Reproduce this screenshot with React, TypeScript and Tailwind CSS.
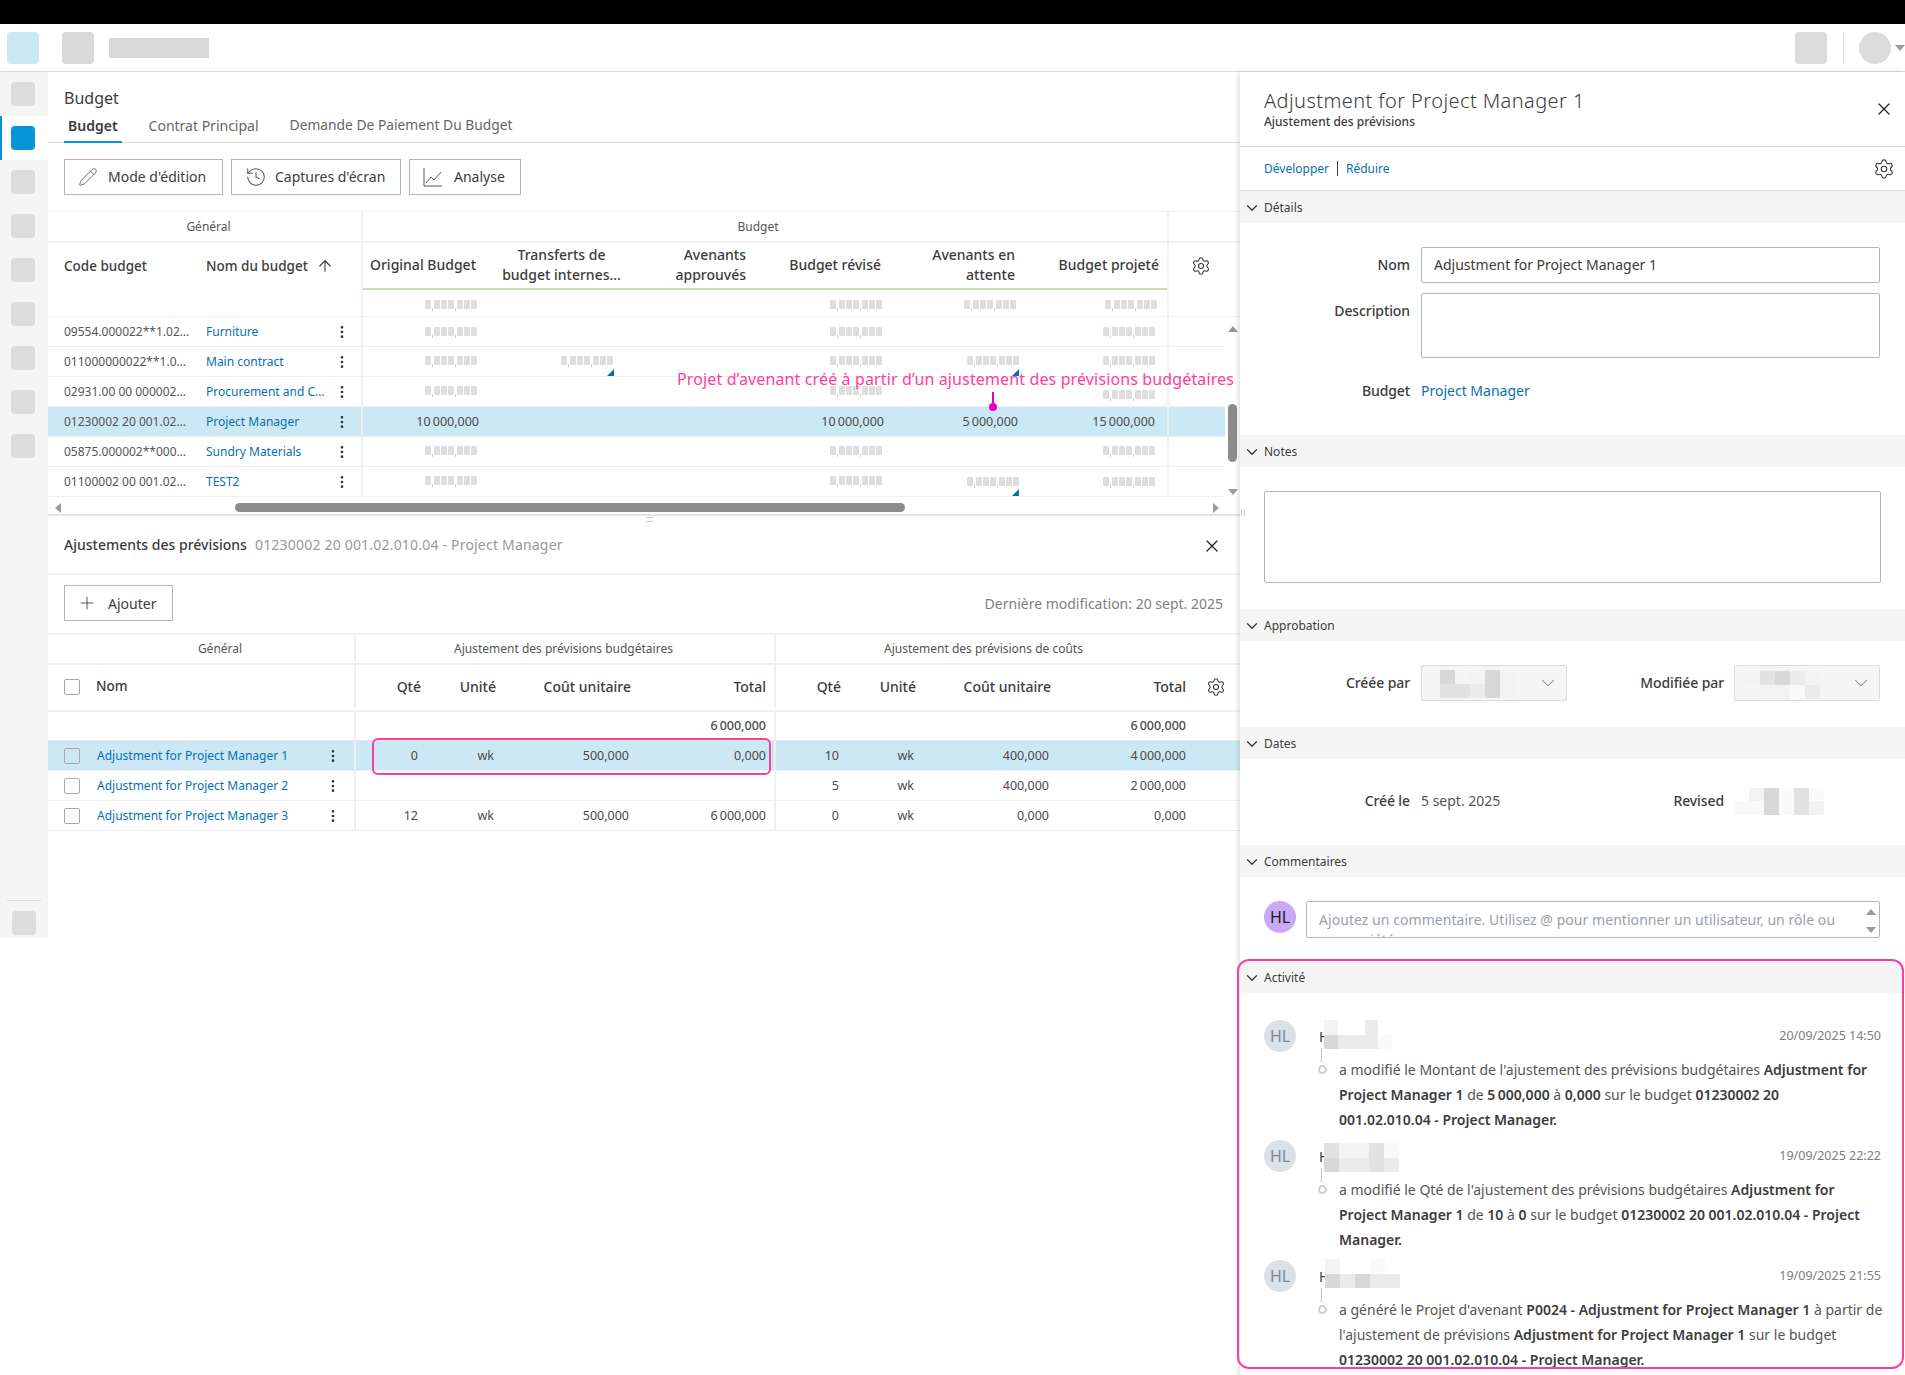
import { ReactNode } from "react";
import { ArrowUp, ChevronDown, EllipsisVertical, History, Pencil, Plus, Settings, X } from "lucide-react";

const budgetGrid = "grid grid-cols-[158px_157px_121px_144px_126px_135px_134px_144px_73px]";
const adjustGrid = "grid grid-cols-[308px_73px_75px_135px_137px_73px_75px_135px_135px_46px]";

const shades = ["bg-transparent", "bg-[#fafafa]", "bg-[#f3f3f3]", "bg-[#ebebeb]", "bg-[#e2e2e2]", "bg-[#d8d8d8]"];

function Mosaic({ rows, cell, className }: { rows: number[][]; cell: string; className?: string }) {
  return (
    <div className={className}>
      {rows.map((row, i) => (
        <div key={i} className="flex">
          {row.map((s, j) => (
            <div key={j} className={`${cell} ${shades[s]}`} />
          ))}
        </div>
      ))}
    </div>
  );
}

function Masked({ className = "" }: { className?: string }) {
  const block = <div className="h-[9px] w-[6px] rounded-[1px] bg-[#dedede]" />;
  const comma = (
    <div className="flex h-[11px] w-[3px] items-end justify-center">
      <div className="h-[3px] w-[1px] bg-[#cfcfcf]" />
    </div>
  );
  const group = (
    <div className="flex gap-[1px]">
      {block}
      {block}
      {block}
    </div>
  );
  return (
    <div className={`flex items-start ${className}`}>
      {block}
      {comma}
      {group}
      {comma}
      {group}
    </div>
  );
}

function Corner({ className = "" }: { className?: string }) {
  return (
    <svg viewBox="0 0 7 7" className={`absolute h-[7px] w-[7px] ${className}`}>
      <polygon points="7,0 7,7 0,7" fill="#0670b0" />
    </svg>
  );
}

function Tri({ up, className = "" }: { up?: boolean; className?: string }) {
  return (
    <svg viewBox="0 0 10 6" className={`h-[6px] w-[10px] ${className}`}>
      <polygon points={up ? "5,0 10,6 0,6" : "0,0 10,0 5,6"} fill="#9a9a9a" />
    </svg>
  );
}

function ChartIcon() {
  return (
    <svg viewBox="0 0 20 20" className="h-5 w-5" fill="none" stroke="#555" strokeWidth="1">
      <path d="M1 1v18h18" />
      <path d="M3 16l5-6 3 3 7-8" />
    </svg>
  );
}

function ToolButton({ icon, label, width, gap }: { icon: ReactNode; label: string; width: string; gap: string }) {
  return (
    <div className={`flex h-9 items-center border border-[#b5b5b5] pl-[13px] text-[14px] text-[#3c3c3c] ${gap} ${width}`}>
      {icon}
      <span className="pb-[2px]">{label}</span>
    </div>
  );
}

function Check({ clear }: { clear?: boolean }) {
  return <div className={`h-4 w-4 shrink-0 rounded-[2px] border border-[#a8a8a8] ${clear ? "" : "bg-white"}`} />;
}

function Num({ children, pr = "pr-[8px]", extra = "" }: { children?: ReactNode; pr?: string; extra?: string }) {
  return <div className={`relative flex items-center justify-end pt-px text-[12.5px] text-[#4a4a4a] ${pr} ${extra}`}>{children}</div>;
}

const budgetRows = [
  { code: "09554.000022**1.02…", name: "Furniture" },
  { code: "011000000022**1.0…", name: "Main contract" },
  { code: "02931.00 00 000002…", name: "Procurement and C…" },
  { code: "01230002 20 001.02…", name: "Project Manager" },
  { code: "05875.000002**000…", name: "Sundry Materials" },
  { code: "01100002 00 001.02…", name: "TEST2" },
];

function BudgetTable() {
  return (
    <div className="border-t border-[#f0f0f0]">
      <div className="flex h-[31px] border-b-2 border-[#f0f0f0] text-[12px] text-[#555]">
        <div className="flex w-[315px] items-center justify-center border-r-2 border-[#f0f0f0] pl-2">Général</div>
        <div className="flex w-[804px] items-center justify-center pr-[14px]">Budget</div>
        <div className="w-[73px] border-l-2 border-[#f0f0f0]" />
      </div>
      <div className={`${budgetGrid} h-[47px] text-[14px] font-medium leading-[20px] text-[#3c3c3c]`}>
        <div className="flex items-center pb-[2px] pl-4 text-[13.5px]">Code budget</div>
        <div className="flex items-center gap-2 border-r-2 border-[#f0f0f0] pb-[2px] text-[13.5px]">
          Nom du budget
          <ArrowUp size={18} strokeWidth={1.5} />
        </div>
        <div className="flex items-center justify-end border-b-2 border-[#c9dfae] pb-[2px] pr-2">Original Budget</div>
        <div className="flex items-center justify-center border-b-2 border-[#c9dfae] pb-[2px] pl-[11px] text-center">
          Transferts de
          <br />
          budget internes…
        </div>
        <div className="flex items-center justify-end border-b-2 border-[#c9dfae] pb-[2px] pr-2 text-right">
          Avenants
          <br />
          approuvés
        </div>
        <div className="flex items-center justify-end border-b-2 border-[#c9dfae] pb-[2px] pr-2">Budget révisé</div>
        <div className="flex items-center justify-end border-b-2 border-[#c9dfae] pb-[2px] pr-2 text-right">
          Avenants en
          <br />
          attente
        </div>
        <div className="flex items-center justify-end border-b-2 border-[#c9dfae] pb-[2px] pr-2">Budget projeté</div>
        <div className="flex items-center border-l-2 border-[#f0f0f0] pb-[2px] pl-[22px]">
          <Settings size={20} strokeWidth={1.3} color="#333" />
        </div>
      </div>

      {/* totals */}
      <div className={`${budgetGrid} h-[27px] border-b border-[#f0f0f0]`}>
        <div />
        <div className="border-r-2 border-[#f0f0f0]" />
        <Num pr="pr-[7px]"><Masked className="mt-[3px]" /></Num>
        <Num />
        <Num />
        <Num pr="pr-[7px]"><Masked className="mt-[3px]" /></Num>
        <Num pr="pr-[7px]"><Masked className="mt-[4px]" /></Num>
        <Num pr="pr-[10px]"><Masked className="mt-[3px]" /></Num>
        <div className="border-l-2 border-[#f0f0f0]" />
      </div>

      {budgetRows.map((r, i) => {
        const selected = i === 3;
        const lift = i > 0 ? "mb-[2px]" : "";
        return (
          <div key={r.code} className={`${budgetGrid} relative h-[30px] border-b border-[#f0f0f0] ${selected ? "bg-[#cce8f5]" : ""}`}>
            <div className="flex items-center whitespace-nowrap pl-4 text-[12px] text-[#555]">{r.code}</div>
            <div className="flex items-center justify-between border-r-2 border-[#f0f0f0] pr-[11px] text-[12px] text-[#0670b0]">
              <span className="whitespace-nowrap">{r.name}</span>
              <EllipsisVertical size={16} strokeWidth={2} color="#333" className="shrink-0" />
            </div>
            {selected ? (
              <>
                <Num pr="pr-[5px]">10{"\u2009"}000,000</Num>
                <Num />
                <Num />
                <Num pr="pr-[5px]">10{"\u2009"}000,000</Num>
                <Num pr="pr-[5px]" extra="pt-[2px]">5{"\u2009"}000,000</Num>
                <Num pr="pr-[12px]">15{"\u2009"}000,000</Num>
                <div className="border-l-2 border-[#f0f0f0]" />
                {/* annotation */}
                <div className="absolute left-[629px] top-[-38px] z-20 whitespace-nowrap text-[16px] leading-5 tracking-[0.13px] text-[#ff3d9e]">
                  Projet d’avenant créé à partir d’un ajustement des prévisions budgétaires
                </div>
                <div className="absolute left-[944px] top-[-15px] h-[15px] w-[2px] bg-[#e600c4]" />
                <div className="absolute left-[941px] top-[-4px] h-2 w-2 rounded-full bg-[#e600c4]" />
              </>
            ) : (
              <>
                <Num pr="pr-[7px]"><Masked className={lift} /></Num>
                <Num pr="pr-[15px]">
                  {i === 1 && (
                    <>
                      <Masked className={lift} />
                      <Corner className="bottom-0 right-[14px]" />
                    </>
                  )}
                </Num>
                <Num />
                <Num pr="pr-[7px]"><Masked className={lift} /></Num>
                <Num pr="pr-[4px]">
                  {(i === 1 || i === 5) && (
                    <>
                      <Masked className={i === 1 ? lift : ""} />
                      <Corner className="bottom-0 right-[4px]" />
                    </>
                  )}
                </Num>
                <Num pr="pr-[12px]"><Masked className={i === 2 ? "mt-[7px]" : i === 5 ? "" : lift} /></Num>
                <div className="border-l-2 border-[#f0f0f0]" />
              </>
            )}
          </div>
        );
      })}

      {/* horizontal scrollbar */}
      <div className="flex h-[19px] items-start border-b-2 border-[#e4e4e4] pl-[5px] pt-[6px]">
        <Tri className="mt-[2px] -rotate-90" up />
        <div className="ml-[172px] h-[9px] w-[670px] rounded-full bg-[#8c8c8c]" />
        <Tri className="ml-[306px] mt-[2px] rotate-90" up />
      </div>
    </div>
  );
}

const adjustRows = [
  { name: "Adjustment for Project Manager 1", a: ["0", "wk", "500,000", "0,000"], b: ["10", "wk", "400,000", "4\u2009000,000"] },
  { name: "Adjustment for Project Manager 2", a: ["", "", "", ""], b: ["5", "wk", "400,000", "2\u2009000,000"] },
  { name: "Adjustment for Project Manager 3", a: ["12", "wk", "500,000", "6\u2009000,000"], b: ["0", "wk", "0,000", "0,000"] },
];

function AdjustmentsTable() {
  return (
    <div className="border-t-2 border-[#f0f0f0]">
      <div className="flex h-[30px] border-b-2 border-[#f0f0f0] pb-px text-[12px] text-[#555]">
        <div className="flex w-[308px] items-center justify-center border-r-2 border-[#f0f0f0] pl-[38px]">Général</div>
        <div className="flex w-[420px] items-center justify-center border-r-2 border-[#f0f0f0] pr-[3px]">Ajustement des prévisions budgétaires</div>
        <div className="flex flex-1 items-center justify-center pr-[49px]">Ajustement des prévisions de coûts</div>
      </div>
      <div className={`${adjustGrid} h-[47px] border-b-2 border-[#f0f0f0] pb-[2px] text-[14px] font-medium text-[#3c3c3c]`}>
        <div className="flex items-center gap-4 border-r-2 border-[#f0f0f0] pl-4">
          <Check />
          <span className="text-[13.5px]">Nom</span>
        </div>
        <div className="flex items-center justify-end pr-2">Qté</div>
        <div className="flex items-center justify-end pr-2">Unité</div>
        <div className="flex items-center justify-end pr-2">Coût unitaire</div>
        <div className="flex items-center justify-end border-r-2 border-[#f0f0f0] pr-2">Total</div>
        <div className="flex items-center justify-end pr-2">Qté</div>
        <div className="flex items-center justify-end pr-2">Unité</div>
        <div className="flex items-center justify-end pr-2">Coût unitaire</div>
        <div className="flex items-center justify-end pr-2">Total</div>
        <div className="flex items-center justify-center pr-[3px]">
          <Settings size={20} strokeWidth={1.3} color="#333" />
        </div>
      </div>
      <div className={`${adjustGrid} h-[29px] border-b border-[#e8e8e8] text-[12.5px] font-medium text-[#4a4a4a]`}>
        <div className="border-r-2 border-[#f0f0f0]" />
        <div />
        <div />
        <div />
        <div className="flex items-center justify-end border-r-2 border-[#f0f0f0] pr-2">6{"\u2009"}000,000</div>
        <div />
        <div />
        <div />
        <div className="flex items-center justify-end pr-2">6{"\u2009"}000,000</div>
        <div />
      </div>
      {adjustRows.map((r, i) => (
        <div key={r.name} className={`${adjustGrid} relative h-[30px] border-b border-[#f0f0f0] ${i === 0 ? "bg-[#cce8f5]" : ""}`}>
          <div className="flex items-center border-r-2 border-[#f0f0f0] pl-4 pr-[13px] text-[12px] text-[#0670b0]">
            <Check clear={i === 0} />
            <span className="ml-[17px] flex-1 whitespace-nowrap">{r.name}</span>
            <EllipsisVertical size={16} strokeWidth={2} color="#333" />
          </div>
          <Num pr="pr-[11px]">{r.a[0]}</Num>
          <Num pr="pr-[10px]">{r.a[1]}</Num>
          <Num pr="pr-[10px]">{r.a[2]}</Num>
          <Num extra="border-r-2 border-[#f0f0f0]">{r.a[3]}</Num>
          <Num pr="pr-[10px]">{r.b[0]}</Num>
          <Num pr="pr-[10px]">{r.b[1]}</Num>
          <Num pr="pr-[10px]">{r.b[2]}</Num>
          <Num>{r.b[3]}</Num>
          <div />
          {i === 0 && (
            <div className="absolute left-[324px] top-[-3px] h-[37px] w-[399px] rounded-[6px] border-2 border-[#f8409c]" />
          )}
        </div>
      ))}
    </div>
  );
}

function SectionHeader({ title }: { title: string }) {
  return (
    <div className="flex h-8 items-center bg-[#f5f5f5] pt-[1px] text-[12px] text-[#3c3c3c]">
      <ChevronDown size={18} strokeWidth={1.6} color="#333" className="mx-[3px]" />
      {title}
    </div>
  );
}

function Label({ children, width = "w-[170px]" }: { children: ReactNode; width?: string }) {
  return <div className={`${width} shrink-0 pb-[2px] text-right text-[14px] font-medium tracking-[-0.1px] text-[#3c3c3c]`}>{children}</div>;
}

function SelectBox({ rows, mosaicClass }: { rows: number[][]; mosaicClass: string }) {
  return (
    <div className="relative h-9 w-[146px] rounded-[2px] border border-[#dcdcdc] bg-[#f5f5f5]">
      <Mosaic rows={rows} cell="h-[14px] w-[15px]" className={mosaicClass} />
      <ChevronDown size={22} strokeWidth={1.1} color="#888" className="absolute right-[7px] top-[6px]" />
    </div>
  );
}

function ActivityItem({
  date,
  mosaic,
  mosaicClass,
  cell = "h-[14.5px] w-[13.5px]",
  children,
}: {
  date: string;
  mosaic: number[][];
  mosaicClass: string;
  cell?: string;
  children: ReactNode;
}) {
  return (
    <div className="relative mb-2 pl-6 pr-6">
      <div className="flex h-8 items-center">
        <div className="flex h-8 w-8 items-center justify-center rounded-full bg-[#d9e1e8] text-[16px] text-[#7d8a96]">HL</div>
        <div className="ml-[23px] flex-1 text-[14px] text-[#3c3c3c]">H</div>
        <div className="text-[12.5px] text-[#808080]">{date}</div>
      </div>
      <Mosaic rows={mosaic} cell={cell} className={mosaicClass} />
      <div className="absolute left-[81px] top-[28px] h-[14px] w-[1px] bg-[#b8c4ce]" />
      <div className="absolute left-[78px] top-[45px] h-[9px] w-[9px] rounded-full border-2 border-[#cfcfcf] bg-white" />
      <div className="mt-[5px] whitespace-nowrap pl-[75px] text-[14px] leading-[25px] text-[#555] [&_b]:font-semibold [&_b]:text-[#3c3c3c]">
        {children}
      </div>
    </div>
  );
}

function RightPanel() {
  return (
    <div className="relative z-10 w-[665px] shrink-0 bg-white shadow-[-2px_0_4px_rgba(0,0,0,0.12)]">
      <div className="relative h-[75px] border-b border-[#dcdcdc] pl-6 pt-[16px]">
        <div className="text-[20px] font-light leading-[26px] tracking-[0.42px] text-[#3c3c3c]">Adjustment for Project Manager 1</div>
        <div className="text-[12px] font-medium leading-[16px] text-[#3c3c3c]">Ajustement des prévisions</div>
        <X size={20} strokeWidth={1.5} color="#222" className="absolute right-[11px] top-[27px]" />
      </div>
      <div className="flex h-[44px] items-center justify-between border-b border-[#dcdcdc] pl-6 pr-[10px] text-[12px] text-[#0670b0]">
        <div className="flex items-center">
          <span>Développer</span>
          <span className="mx-2 h-[15px] w-[1px] bg-[#3c3c3c]" />
          <span>Réduire</span>
        </div>
        <Settings size={22} strokeWidth={1.2} color="#333" />
      </div>

      <SectionHeader title="Détails" />
      <div className="h-[212px] pt-6">
        <div className="flex h-9 items-center gap-[11px]">
          <Label>Nom</Label>
          <div className="flex h-9 w-[459px] items-center rounded-[2px] border border-[#b5b5b5] pb-[2px] pl-3 text-[14px] text-[#3c3c3c]">
            Adjustment for Project Manager 1
          </div>
        </div>
        <div className="mt-[10px] flex gap-[11px]">
          <div className="pt-[7px]">
            <Label>Description</Label>
          </div>
          <div className="h-[65px] w-[459px] rounded-[2px] border border-[#b5b5b5]" />
        </div>
        <div className="mt-[22px] flex items-center gap-[11px]">
          <Label>Budget</Label>
          <span className="pb-[2px] text-[14px] text-[#0670b0]">Project Manager</span>
        </div>
      </div>

      <SectionHeader title="Notes" />
      <div className="h-[142px] pl-6 pt-6">
        <div className="h-[92px] w-[617px] rounded-[2px] border border-[#b5b5b5]" />
      </div>

      <SectionHeader title="Approbation" />
      <div className="flex h-[86px] items-start pt-6">
        <div className="flex h-9 items-center gap-[11px]">
          <Label>Créée par</Label>
          <SelectBox
            rows={[
              [5, 0, 2, 5, 2],
              [4, 4, 3, 5, 2],
            ]}
            mosaicClass="absolute left-[18px] top-[4px]"
          />
        </div>
        <div className="ml-px flex h-9 items-center gap-[10px]">
          <Label width="w-[156px]">Modifiée par</Label>
          <SelectBox
            rows={[
              [2, 4, 5, 3, 2],
              [0, 2, 2, 1, 3],
            ]}
            mosaicClass="absolute left-[10px] top-[5px]"
          />
        </div>
      </div>

      <SectionHeader title="Dates" />
      <div className="flex h-[86px] items-center pb-[2px]">
        <div className="flex items-center gap-[11px]">
          <Label>Créé le</Label>
          <span className="w-[146px] pb-[2px] text-[14px] text-[#555]">5 sept. 2025</span>
        </div>
        <div className="ml-px flex items-center gap-[10px]">
          <Label width="w-[156px]">Revised</Label>
          <Mosaic
            rows={[
              [0, 2, 5, 1, 4, 1],
              [1, 1, 5, 1, 4, 2],
            ]}
            cell="h-[13.5px] w-[15px]"
          />
        </div>
      </div>

      <SectionHeader title="Commentaires" />
      <div className="flex h-[84px] items-start gap-[10px] pl-6 pt-6">
        <div className="flex h-8 w-8 items-center justify-center rounded-full bg-[#c9a8f4] text-[16px] text-[#222]">HL</div>
        <div className="relative h-[37px] w-[574px] overflow-hidden rounded-[2px] border border-[#b5b5b5] pl-3 pt-[8px] text-[14px] leading-[20px] tracking-[0.05px] text-[#9aa0ad]">
          Ajoutez un commentaire. Utilisez @ pour mentionner un utilisateur, un rôle ou
          <br />
          une société
          <Tri up className="absolute right-[3px] top-[7px]" />
          <Tri className="absolute right-[3px] top-[25px]" />
        </div>
      </div>

      <div className="relative">
        <SectionHeader title="Activité" />
        <div className="absolute left-[-3px] top-[-2px] z-10 h-[410px] w-[667px] rounded-[12px] border-2 border-[#f8409c]" />
        <div className="pt-[27px]">
          <ActivityItem
            date="20/09/2025 14:50"
            mosaic={[
              [2, 0, 0, 3, 0],
              [5, 3, 3, 3, 1],
            ]}
            mosaicClass="absolute left-[84px] top-0"
          >
            a modifié le Montant de l'ajustement des prévisions budgétaires <b>Adjustment for</b>
            <br />
            <b>Project Manager 1</b> de <b>5{"\u2009"}000,000</b> à <b>0,000</b> sur le budget <b>01230002 20</b>
            <br />
            <b>001.02.010.04 - Project Manager.</b>
          </ActivityItem>
          <ActivityItem
            date="19/09/2025 22:22"
            mosaic={[
              [4, 2, 2, 4, 1],
              [5, 3, 3, 4, 3],
            ]}
            mosaicClass="absolute left-[84px] top-[3px]"
            cell="h-[14.5px] w-[15px]"
          >
            a modifié le Qté de l'ajustement des prévisions budgétaires <b>Adjustment for</b>
            <br />
            <b>Project Manager 1</b> de <b>10</b> à <b>0</b> sur le budget <b>01230002 20 001.02.010.04 - Project</b>
            <br />
            <b>Manager.</b>
          </ActivityItem>
          <ActivityItem
            date="19/09/2025 21:55"
            mosaic={[
              [2, 0, 0, 1, 0],
              [5, 3, 5, 3, 3],
            ]}
            mosaicClass="absolute left-[85px] top-[-1px]"
            cell="h-[14.5px] w-[15px]"
          >
            a généré le Projet d'avenant <b>P0024 - Adjustment for Project Manager 1</b> à partir de
            <br />
            l'ajustement de prévisions <b>Adjustment for Project Manager 1</b> sur le budget
            <br />
            <b>01230002 20 001.02.010.04 - Project Manager.</b>
          </ActivityItem>
        </div>
      </div>

      {/* panel resize grip */}
      <div className="absolute left-[1px] top-[438px] h-[6px] w-[4px] border-x border-[#c8c8c8]" />
    </div>
  );
}

function Sidebar() {
  const items = [0, 1, 2, 3, 4, 5, 6, 7, 8];
  return (
    <div className="flex h-[866px] w-12 shrink-0 flex-col bg-[#f5f5f5]">
      {items.map((i) => (
        <div key={i} className={`flex h-[44px] items-center justify-center ${i === 1 ? "border-l-2 border-[#0696d7] bg-white pr-[4px]" : "pr-[2px]"}`}>
          <div className={`h-6 w-6 rounded-[4px] ${i === 1 ? "bg-[#0696d7]" : "bg-[#dcdcdc]"}`} />
        </div>
      ))}
      <div className="mt-auto">
        <div className="mx-[7px] h-[1px] bg-[#dcdcdc]" />
        <div className="mb-[3px] ml-3 mt-[10px] h-6 w-6 rounded-[4px] bg-[#dcdcdc]" />
      </div>
    </div>
  );
}

export default function App() {
  return (
    <div className="relative h-[1375px] w-[1905px] overflow-hidden bg-white [font-family:'Noto_Sans',sans-serif]">
      <div className="h-6 bg-black" />
      <div className="flex h-[48px] items-center border-b border-[#dcdcdc]">
        <div className="ml-[7px] h-8 w-8 rounded-[4px] bg-[#cce8f5]" />
        <div className="ml-[23px] h-8 w-8 rounded-[4px] bg-[#d9d9d9]" />
        <div className="ml-[15px] h-5 w-[100px] bg-[#d9d9d9]" />
        <div className="ml-auto h-8 w-8 rounded-[4px] bg-[#dcdcdc]" />
        <div className="ml-4 h-8 w-[1px] bg-[#dcdcdc]" />
        <div className="ml-[15px] h-8 w-8 rounded-full bg-[#dcdcdc]" />
        <Tri className="ml-1" />
      </div>
      <div className="flex">
        <Sidebar />
        <div className="relative w-[1192px] shrink-0">
          <div className="h-[40px] pl-4 pt-3 text-[16px] leading-[28px] text-[#3c3c3c]">Budget</div>
          <div className="flex h-[31px] gap-[23px] border-b border-[#dcdcdc] pl-4 text-[14px] text-[#666]">
            <div className="h-[31px] border-b-2 border-[#0696d7] px-1 pt-[3px] font-semibold text-[#3c3c3c]">Budget</div>
            <div className="px-1 pt-[3px]">Contrat Principal</div>
            <div className="px-1 pt-[3px] text-[13.8px]">Demande De Paiement Du Budget</div>
          </div>
          <div className="flex gap-2 px-4 py-4">
            <ToolButton icon={<Pencil size={20} strokeWidth={1} color="#555" />} label="Mode d'édition" width="w-[159px]" gap="gap-[10px]" />
            <ToolButton icon={<History size={22} strokeWidth={1.1} color="#555" />} label="Captures d'écran" width="w-[170px]" gap="gap-[8px]" />
            <ToolButton icon={<ChartIcon />} label="Analyse" width="w-[112px]" gap="gap-[11px]" />
          </div>
          <BudgetTable />

          {/* vertical scrollbar */}
          <div className="absolute left-[1177px] top-[250px] flex h-[177px] w-[15px] flex-col items-center bg-white py-[4px]">
            <Tri up />
            <div className="mt-[72px] h-[58px] w-[9px] rounded-full bg-[#8c8c8c]" />
            <Tri className="mt-auto" />
          </div>

          <div className="relative flex h-[59px] items-center border-b-2 border-[#f0f0f0] pl-4 text-[14px]">
            <span className="font-medium text-[#3c3c3c]">Ajustements des prévisions</span>
            <span className="ml-2 tracking-[0.2px] text-[#999]">01230002 20 001.02.010.04 - Project Manager</span>
            <X size={20} strokeWidth={1.5} color="#222" className="absolute right-[18px] top-[20px]" />
            <div className="absolute left-[598px] top-[1px] h-[5px] w-[7px] border-y border-[#c8c8c8]" />
          </div>
          <div className="flex h-[58px] items-start justify-between pl-4 pr-[17px] pt-[10px]">
            <div className="flex h-9 w-[109px] items-center gap-[11px] border border-[#b5b5b5] pl-3 text-[14px] text-[#3c3c3c]">
              <Plus size={20} strokeWidth={1} color="#333" />
              Ajouter
            </div>
            <div className="pt-2 text-[14px] text-[#808080]">Dernière modification: 20 sept. 2025</div>
          </div>
          <AdjustmentsTable />
        </div>
        <RightPanel />
      </div>
    </div>
  );
}
